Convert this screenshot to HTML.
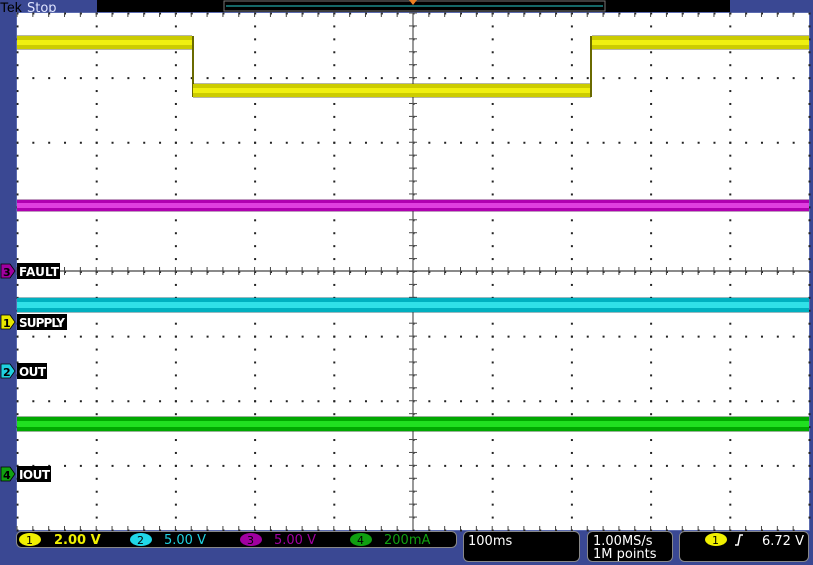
<!DOCTYPE html>
<html><head><meta charset="utf-8"><style>
html,body{margin:0;padding:0;width:813px;height:565px;overflow:hidden;background:#3a4893;font-family:"DejaVu Sans","Liberation Sans",sans-serif}
svg{position:absolute;left:0;top:0}
</style></head><body>
<svg id="s" width="813" height="565" xmlns="http://www.w3.org/2000/svg">
<rect x="0" y="0" width="813" height="565" fill="#3a4893"/>
<text x="0" y="12" font-family="Liberation Sans,sans-serif" font-size="14" fill="#000">Tek</text>
<text x="27" y="12" font-family="DejaVu Sans,sans-serif" font-size="13" fill="#dfe4ff">Stop</text>
<rect x="97" y="0" width="633" height="12" fill="#000"/>
<rect x="224" y="1" width="381" height="10" fill="none" stroke="#777" stroke-width="1"/>
<line x1="226" y1="6" x2="603" y2="6" stroke="#1a8a8a" stroke-width="1.5"/>
<polygon points="409,0 417,0 413,5" fill="#f08020"/>
<rect x="16.5" y="12.5" width="793" height="518" fill="#fff" stroke="#5a6ab0" stroke-width="1"/>
<g id="grid"></g>
<line x1="413" y1="13" x2="413" y2="530" stroke="#555" stroke-width="1.2"/>
<line x1="17" y1="271" x2="809" y2="271" stroke="#444" stroke-width="1.2"/>
<g>
<rect x="17" y="35" width="175" height="15" fill="#303000" opacity="0.35"/>
<rect x="17" y="36" width="175" height="13" fill="#cccc00"/>
<rect x="17" y="40" width="175" height="5" fill="#f0f010"/>
<rect x="192" y="36" width="2" height="61" fill="#6a6a00"/>
<rect x="193" y="83" width="398" height="15" fill="#303000" opacity="0.35"/>
<rect x="193" y="84" width="398" height="13" fill="#cccc00"/>
<rect x="193" y="88" width="398" height="5" fill="#f0f010"/>
<rect x="590" y="36" width="2" height="61" fill="#6a6a00"/>
<rect x="592" y="35" width="217" height="15" fill="#303000" opacity="0.35"/>
<rect x="592" y="36" width="217" height="13" fill="#cccc00"/>
<rect x="592" y="40" width="217" height="5" fill="#f0f010"/>
<rect x="17" y="199" width="792" height="13" fill="#600060" opacity="0.4"/>
<rect x="17" y="200" width="792" height="11" fill="#b000b0"/>
<rect x="17" y="203" width="792" height="5" fill="#e040e0"/>
<rect x="17" y="297" width="792" height="16" fill="#005060" opacity="0.4"/>
<rect x="17" y="298" width="792" height="14" fill="#00b0c0"/>
<rect x="17" y="302" width="792" height="6" fill="#30e0e8"/>
<rect x="17" y="416" width="792" height="16" fill="#004000" opacity="0.4"/>
<rect x="17" y="417" width="792" height="14" fill="#00a800"/>
<rect x="17" y="421" width="792" height="6" fill="#20e020"/>
</g>
<g font-family="DejaVu Sans,sans-serif" font-size="12" font-weight="bold">
<polygon points="1,264 10,264 15,271 10,278 1,278" fill="#a000a0" stroke="#000" stroke-width="0.8"/>
<text x="3" y="276" font-size="11" fill="#000">3</text>
<rect x="17" y="263" width="43" height="16" fill="#000"/>
<text x="19" y="276" fill="#fff" textLength="40">FAULT</text>
<polygon points="1,315 10,315 15,322 10,329 1,329" fill="#e8e800" stroke="#000" stroke-width="0.8"/>
<text x="3" y="327" font-size="11" fill="#000">1</text>
<rect x="17" y="314" width="50" height="16" fill="#000"/>
<text x="19" y="327" fill="#fff" textLength="46">SUPPLY</text>
<polygon points="1,364 10,364 15,371 10,378 1,378" fill="#20d0e0" stroke="#000" stroke-width="0.8"/>
<text x="3" y="376" font-size="11" fill="#000">2</text>
<rect x="17" y="363" width="30" height="16" fill="#000"/>
<text x="19" y="376" fill="#fff" textLength="27">OUT</text>
<polygon points="1,467 10,467 15,474 10,481 1,481" fill="#10a010" stroke="#000" stroke-width="0.8"/>
<text x="3" y="479" font-size="11" fill="#000">4</text>
<rect x="17" y="466" width="34" height="16" fill="#000"/>
<text x="19" y="479" fill="#fff" textLength="31">IOUT</text>
</g>
<g font-family="DejaVu Sans,sans-serif" font-size="13">
<rect x="16.5" y="531.5" width="440" height="16" rx="5" fill="#000" stroke="#888"/>
<ellipse cx="30" cy="539.5" rx="11" ry="6.5" fill="#f0f000"/><text x="26" y="544" font-size="11" fill="#000">1</text>
<text x="54" y="544" fill="#f0f000" font-weight="bold">2.00 V</text>
<ellipse cx="141" cy="539.5" rx="11" ry="6.5" fill="#20d8e8"/><text x="137" y="544" font-size="11" fill="#000">2</text>
<text x="164" y="544" fill="#20d0e0">5.00 V</text>
<ellipse cx="251" cy="539.5" rx="11" ry="6.5" fill="#a000a0"/><text x="247" y="544" font-size="11" fill="#000">3</text>
<text x="274" y="544" fill="#a000a0">5.00 V</text>
<ellipse cx="361" cy="539.5" rx="11" ry="6.5" fill="#10a010"/><text x="357" y="544" font-size="11" fill="#000">4</text>
<text x="384" y="544" fill="#10a010">200mA</text>
<rect x="463.5" y="531.5" width="116" height="30" rx="5" fill="#000" stroke="#888"/>
<text x="468" y="545" fill="#fff">100ms</text>
<rect x="587.5" y="531.5" width="85" height="30" rx="5" fill="#000" stroke="#888"/>
<text x="593" y="545" fill="#fff">1.00MS/s</text>
<text x="593" y="558" fill="#fff">1M points</text>
<rect x="679.5" y="531.5" width="129" height="30" rx="5" fill="#000" stroke="#888"/>
<ellipse cx="716" cy="539.5" rx="11" ry="6.5" fill="#f0f000"/><text x="712" y="544" font-size="11" fill="#000">1</text>
<path d="M735,545 L738,545 L740,535 L743,535" stroke="#fff" stroke-width="1.5" fill="none"/>
<text x="762" y="545" fill="#fff">6.72 V</text>
</g>
</svg>
<script>
var g=document.getElementById('grid'),h='';
var x0=17,x1=809,y0=13,y1=530,dx=(x1-x0)/10,dy=(y1-y0)/8;
for(var i=0;i<=10;i++){var x=x0+i*dx;for(var y=y0;y<=y1;y+=dy/5)h+='<rect x="'+(x-0.5)+'" y="'+(y-0.5)+'" width="2" height="2" fill="#222"/>';}
for(var j=0;j<=8;j++){var y=y0+j*dy;for(var x=x0;x<=x1;x+=dx/5)h+='<rect x="'+(x-0.5)+'" y="'+(y-0.5)+'" width="2" height="2" fill="#222"/>';}
for(var x=x0;x<=x1;x+=dx/5){h+='<rect x="'+(x-0.5)+'" y="267" width="1" height="8" fill="#444"/>';h+='<rect x="'+(x-0.5)+'" y="13" width="1" height="4" fill="#444"/>';h+='<rect x="'+(x-0.5)+'" y="526" width="1" height="4" fill="#444"/>';}
for(var y=y0;y<=y1;y+=dy/5)h+='<rect x="409" y="'+(y-0.5)+'" width="8" height="1" fill="#444"/>';
g.innerHTML=h;
</script>
</body></html>
